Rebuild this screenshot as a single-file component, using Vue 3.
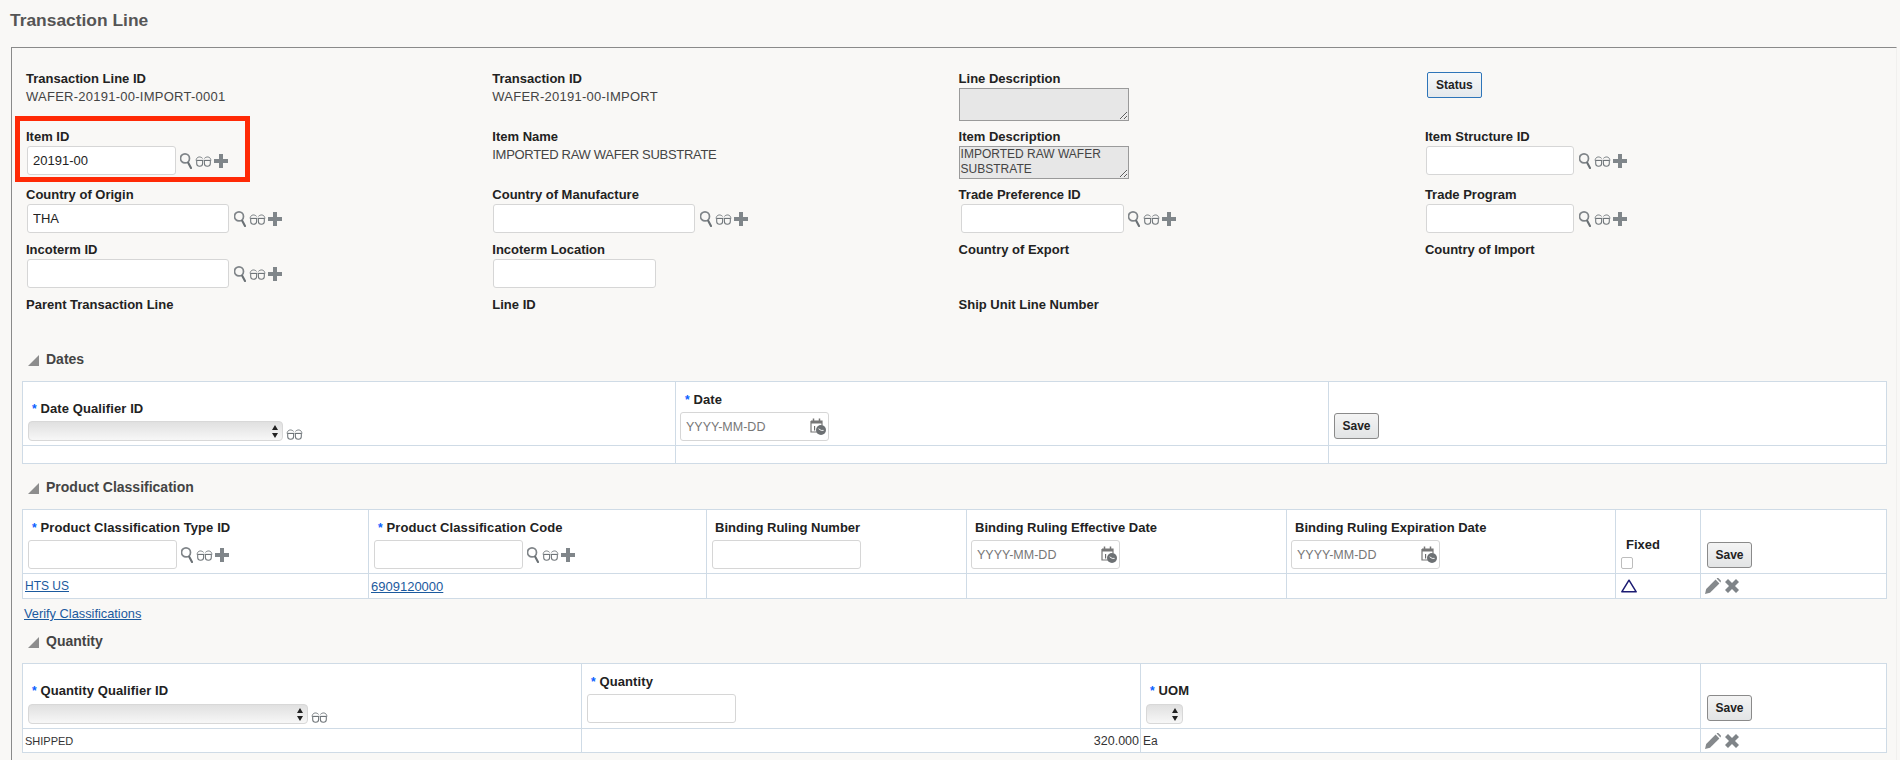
<script setup>
const lookupIcons = ['search', 'glasses', 'plus']

const formFields = [
  { label: 'Transaction Line ID', value: 'WAFER-20191-00-IMPORT-0001', spacing: 'wide' },
  { label: 'Transaction ID', value: 'WAFER-20191-00-IMPORT', spacing: 'wide' },
  { label: 'Line Description', area: '' },
  { button: 'Status' },
  { label: 'Item ID', input: '20191-00', size: 'w-s', icons: true },
  { label: 'Item Name', value: 'IMPORTED RAW WAFER SUBSTRATE', spacing: 'tight' },
  { label: 'Item Description', area: 'IMPORTED RAW WAFER SUBSTRATE' },
  { label: 'Item Structure ID', input: '', size: 'w-s', icons: true },
  { label: 'Country of Origin', input: 'THA', size: 'w-l', icons: true },
  { label: 'Country of Manufacture', input: '', size: 'w-l', icons: true },
  { label: 'Trade Preference ID', input: '', size: 'w-m', icons: true, shift: true },
  { label: 'Trade Program', input: '', size: 'w-s', icons: true },
  { label: 'Incoterm ID', input: '', size: 'w-l', icons: true },
  { label: 'Incoterm Location', input: '', size: 'w-m' },
  { label: 'Country of Export' },
  { label: 'Country of Import' },
  { label: 'Parent Transaction Line' },
  { label: 'Line ID' },
  { label: 'Ship Unit Line Number' }
]
</script>

<template>
  <div class="page">
    <svg class="sprite" aria-hidden="true">
      <symbol id="i-search" viewBox="0 0 12 16">
        <circle cx="5" cy="5.4" r="4.5" fill="none" stroke="#7f8488" stroke-width="1.7" />
        <path d="M8.2 9.8 L11 15" stroke="#6a7074" stroke-width="2.1" stroke-linecap="round" />
      </symbol>
      <symbol id="i-glasses" viewBox="0 0 17 11">
        <path d="M1.2 3.8 C1.8 .4 5.6 .2 7.6 2.4 M9.4 2.4 C11.4 .2 15.2 .4 15.8 3.8" fill="none" stroke="#7a8084" stroke-width="1" />
        <path d="M.4 4.2 H16.6" stroke="#a4a8ab" stroke-width=".7" />
        <path d="M1.7 4.4 H7.6 V7.6 C7.6 9.4 6.4 10.3 4.6 10.3 C2.9 10.3 1.7 9.4 1.7 7.6 Z" fill="none" stroke="#6f7579" stroke-width="1.05" />
        <path d="M9.4 4.4 H15.3 V7.6 C15.3 9.4 14.1 10.3 12.4 10.3 C10.6 10.3 9.4 9.4 9.4 7.6 Z" fill="none" stroke="#6f7579" stroke-width="1.05" />
      </symbol>
      <symbol id="i-plus" viewBox="0 0 14 14">
        <path d="M5 0 H9 V5 H14 V9 H9 V14 H5 V9 H0 V5 H5 Z" fill="#80868a" />
      </symbol>
      <symbol id="i-calendar" viewBox="0 0 16 17">
        <path d="M1 3 H12 V7 M1 3 V14 H7" fill="none" stroke="#777" stroke-width="1.2" />
        <path d="M1 3 H12 V5.5 H1 Z" fill="#777" />
        <path d="M3.5 .5 V3 M9.5 .5 V3" stroke="#777" stroke-width="1.5" />
        <path d="M4.6 8 V12.6" stroke="#666" stroke-width="1.1" />
        <circle cx="11" cy="12" r="5" fill="#6c7073" />
        <path d="M8.6 10.8 L11.2 12.4 L13.6 12.4" fill="none" stroke="#fff" stroke-width=".9" />
      </symbol>
      <symbol id="i-pencil" viewBox="0 0 16 16">
        <path d="M0 16 L1.2 11 L10.6 1.6 L14.4 5.4 L5 14.8 Z" fill="#85898c" />
        <path d="M11.6 .6 L12.2 0 C12.8 -.2 13.4 0 13.8 .4 L15.6 2.2 C16 2.6 16 3.2 15.8 3.8 L15.4 4.4 Z" fill="#85898c" />
      </symbol>
      <symbol id="i-cross" viewBox="0 0 14 14">
        <path d="M3 0 L7 4 L11 0 L14 3 L10 7 L14 11 L11 14 L7 10 L3 14 L0 11 L4 7 L0 3 Z" fill="#7f8488" />
      </symbol>
      <symbol id="i-triangle" viewBox="0 0 16 14">
        <path d="M8 1.2 L15.2 12.8 H.8 Z" fill="none" stroke="#1b1b72" stroke-width="1.5" stroke-linejoin="round" />
      </symbol>
      <symbol id="i-updown" viewBox="0 0 6 13">
        <path d="M3 0 L6 5 H0 Z M3 13 L0 8 H6 Z" fill="#222" />
      </symbol>
    </svg>

    <h1 class="title">Transaction Line</h1>

    <div class="panel">
      <div class="form-grid">
        <div v-for="field in formFields" :key="field.label || field.button" class="field">
          <template v-if="field.button">
            <button class="status-btn" type="button">{{ field.button }}</button>
          </template>
          <template v-else>
            <div class="lbl">{{ field.label }}</div>
            <div v-if="field.value" class="val" :class="field.spacing">{{ field.value }}</div>
            <textarea v-if="field.area !== undefined" class="area" readonly :value="field.area"></textarea>
            <div v-if="field.input !== undefined" class="input-row" :class="{ shift: field.shift }">
              <input class="txt" :class="field.size" type="text" :value="field.input" />
              <span v-if="field.icons" class="lookup">
                <svg v-for="icon in lookupIcons" :key="icon" :class="'ic-' + icon"><use :href="'#i-' + icon" /></svg>
              </span>
            </div>
          </template>
        </div>
      </div>

      <h2 class="section first"><span class="caret"></span>Dates</h2>
      <table class="grid dates">
        <colgroup><col class="c653" /><col class="c653" /><col /></colgroup>
        <tbody>
          <tr class="head-64">
            <td>
              <div class="th-lbl"><i>*</i> Date Qualifier ID</div>
              <div class="input-row">
                <span class="pick w-pick"><select></select><svg class="updown"><use href="#i-updown" /></svg></span>
                <svg class="ic-glasses after-pick"><use href="#i-glasses" /></svg>
              </div>
            </td>
            <td>
              <div class="th-lbl"><i>*</i> Date</div>
              <div class="date"><input type="text" placeholder="YYYY-MM-DD" /><svg class="ic-calendar"><use href="#i-calendar" /></svg></div>
            </td>
            <td class="save-cell"><button class="save" type="button">Save</button></td>
          </tr>
          <tr class="row-18"><td></td><td></td><td></td></tr>
        </tbody>
      </table>

      <h2 class="section"><span class="caret"></span>Product Classification</h2>
      <table class="grid product">
        <colgroup>
          <col class="c346" /><col class="c338" /><col class="c260" /><col class="c320" /><col class="c329" /><col class="c85" /><col />
        </colgroup>
        <tbody>
          <tr class="head-64">
            <td>
              <div class="th-lbl"><i>*</i> Product Classification Type ID</div>
              <div class="input-row">
                <input class="txt w-s" type="text" />
                <span class="lookup"><svg v-for="icon in lookupIcons" :key="icon" :class="'ic-' + icon"><use :href="'#i-' + icon" /></svg></span>
              </div>
            </td>
            <td>
              <div class="th-lbl"><i>*</i> Product Classification Code</div>
              <div class="input-row">
                <input class="txt w-s" type="text" />
                <span class="lookup"><svg v-for="icon in lookupIcons" :key="icon" :class="'ic-' + icon"><use :href="'#i-' + icon" /></svg></span>
              </div>
            </td>
            <td>
              <div class="th-lbl plain">Binding Ruling Number</div>
              <input class="txt w-s" type="text" />
            </td>
            <td>
              <div class="th-lbl plain">Binding Ruling Effective Date</div>
              <div class="date"><input type="text" placeholder="YYYY-MM-DD" /><svg class="ic-calendar"><use href="#i-calendar" /></svg></div>
            </td>
            <td>
              <div class="th-lbl plain">Binding Ruling Expiration Date</div>
              <div class="date"><input type="text" placeholder="YYYY-MM-DD" /><svg class="ic-calendar"><use href="#i-calendar" /></svg></div>
            </td>
            <td class="fixed-cell">
              <div class="th-lbl plain">Fixed</div>
              <span class="check"></span>
            </td>
            <td class="save-cell"><button class="save" type="button">Save</button></td>
          </tr>
          <tr class="row-25">
            <td class="cell short"><a href="#">HTS US</a></td>
            <td class="cell"><a href="#">6909120000</a></td>
            <td></td><td></td><td></td>
            <td class="tri-cell"><svg class="ic-triangle"><use href="#i-triangle" /></svg></td>
            <td class="act-cell"><svg class="ic-pencil"><use href="#i-pencil" /></svg><svg class="ic-cross"><use href="#i-cross" /></svg></td>
          </tr>
        </tbody>
      </table>
      <a class="verify" href="#">Verify Classifications</a>

      <h2 class="section qty"><span class="caret"></span>Quantity</h2>
      <table class="grid quantity">
        <colgroup><col class="c559" /><col class="c559" /><col class="c560" /><col /></colgroup>
        <tbody>
          <tr class="head-65">
            <td>
              <div class="th-lbl"><i>*</i> Quantity Qualifier ID</div>
              <div class="input-row">
                <span class="pick w-pick-q"><select></select><svg class="updown"><use href="#i-updown" /></svg></span>
                <svg class="ic-glasses after-pick"><use href="#i-glasses" /></svg>
              </div>
            </td>
            <td>
              <div class="th-lbl"><i>*</i> Quantity</div>
              <input class="txt w-s" type="text" />
            </td>
            <td>
              <div class="th-lbl"><i>*</i> UOM</div>
              <span class="pick w-uom"><select></select><svg class="updown"><use href="#i-updown" /></svg></span>
            </td>
            <td class="save-cell"><button class="save" type="button">Save</button></td>
          </tr>
          <tr class="row-24">
            <td class="cell short tiny">SHIPPED</td>
            <td class="cell num">320.000</td>
            <td class="cell short">Ea</td>
            <td class="act-cell"><svg class="ic-pencil"><use href="#i-pencil" /></svg><svg class="ic-cross"><use href="#i-cross" /></svg></td>
          </tr>
        </tbody>
      </table>
    </div>

    <div class="highlight"></div>
  </div>
</template>

<style>
html, body { margin: 0; background: #f9f8f6; }
</style>

<style scoped>
.page {
  position: relative;
  height: 760px;
  overflow: hidden;
  background: #f9f8f6;
  font-family: "Liberation Sans", Arial, sans-serif;
  font-size: 13px;
  color: #333;
}
.sprite { position: absolute; width: 0; height: 0; }
.title {
  margin: 0;
  height: 47px;
  padding: 10px 0 0 10px;
  box-sizing: border-box;
  font-size: 17.4px;
  line-height: 20px;
  font-weight: bold;
  color: #555;
}
.panel {
  margin-left: 11px;
  width: 1886px;
  height: 713px;
  box-sizing: border-box;
  border-left: 1px solid #8a8a8a;
  border-top: 1px solid #8a8a8a;
  border-right: 1px solid #f1f0ee;
}
.form-grid {
  display: grid;
  grid-template-columns: repeat(4, 466.3px);
  grid-template-rows: 58px 58px 55px 55px 52px;
  padding: 23px 0 0 14px;
}
.lbl {
  font-weight: bold;
  font-size: 13px;
  line-height: 16px;
  color: #222;
}
.val {
  line-height: 16px;
  margin-top: 2px;
  color: #444;
}
.val.wide { letter-spacing: .25px; }
.val.tight { letter-spacing: -.3px; }
.input-row { display: flex; align-items: center; }
.field .input-row { margin-top: 1px; }
.field .input-row.shift { margin-left: 1px; }
.field .txt { margin-left: 1px; }
.txt {
  height: 29px;
  box-sizing: border-box;
  border: 1px solid #d6d6d6;
  border-radius: 3px;
  background: #fff;
  padding: 0 5px;
  font: 13px "Liberation Sans", Arial, sans-serif;
  color: #222;
  display: block;
}
.w-s { width: 148.5px; }
.w-m { width: 163px; }
.w-l { width: 202px; }
.lookup { display: flex; align-items: center; margin-left: 4.5px; }
.ic-search { width: 12px; height: 16px; margin-right: 3px; }
.ic-glasses { width: 17px; height: 11px; margin-right: 2px; margin-top: 2px; }
.ic-plus { width: 14px; height: 14px; margin-top: 1px; }
.area {
  display: block;
  width: 170px;
  height: 33px;
  box-sizing: border-box;
  margin: 1px 0 0 0;
  padding: 0 1px;
  border: 1px solid #9a9a9a;
  border-radius: 0;
  background: #e7e7e7;
  font: 12px/15px "Liberation Sans", Arial, sans-serif;
  color: #444;
  resize: both;
  outline: none;
}
.status-btn {
  display: block;
  width: 55px;
  height: 26px;
  margin: 1px 0 0 2px;
  border: 1px solid #2e75b9;
  border-radius: 2px;
  background: linear-gradient(#f6f8f9, #e5e9ec);
  font: bold 12px "Liberation Sans", Arial, sans-serif;
  color: #222;
  padding: 0;
}
.section {
  display: flex;
  align-items: center;
  margin: 13px 0 12px 16px;
  height: 20px;
  font-size: 14px;
  font-weight: bold;
  color: #444;
}
.section.first { margin-top: 0; margin-bottom: 12px; }
.section.qty { margin-top: 10px; }
.caret {
  width: 0;
  height: 0;
  margin-right: 7px;
  margin-top: 3px;
  border-left: 11px solid transparent;
  border-bottom: 11px solid #8d8d8d;
}
.grid {
  margin-left: 10px;
  width: 1865px;
  table-layout: fixed;
  border-collapse: collapse;
  background: #fff;
}
.grid td {
  border: 1px solid #cfdbe6;
  vertical-align: bottom;
  padding: 0 0 4px 5px;
}
.c653 { width: 653px; }
.c346 { width: 346px; }
.c338 { width: 338px; }
.c260 { width: 260px; }
.c320 { width: 320px; }
.c329 { width: 329px; }
.c85 { width: 85px; }
.c559 { width: 559px; }
.c560 { width: 560px; }
.head-64 { height: 64px; }
.head-65 { height: 65px; }
.row-18 { height: 18px; }
.row-24 { height: 24px; }
.row-25 { height: 25px; }
.th-lbl {
  font-weight: bold;
  font-size: 13px;
  line-height: 16px;
  letter-spacing: .1px;
  color: #222;
  padding-left: 4px;
  margin-bottom: 4px;
}
.th-lbl.plain { padding-left: 3px; letter-spacing: 0; }
.th-lbl i {
  font-style: normal;
  color: #0b5fff;
  font-size: 12px;
}
.quantity .th-lbl { margin-bottom: 5px; }
.quantity .txt { margin-top: -1px; margin-bottom: 1px; }
.pick { position: relative; display: block; height: 20px; }
.w-pick { width: 255px; }
.w-pick-q { width: 280px; }
.w-uom { width: 37px; }
.pick select {
  appearance: none;
  display: block;
  width: 100%;
  height: 20px;
  box-sizing: border-box;
  border: 1px solid #d8d8d8;
  border-radius: 4px;
  background: linear-gradient(#e0e0e0, #f7f7f7);
}
.updown {
  position: absolute;
  right: 5px;
  top: 4px;
  width: 6px;
  height: 13px;
}
.after-pick { margin-left: 3px; margin-right: 0; margin-top: 6px; }
.date {
  display: flex;
  align-items: center;
  width: 149px;
  height: 29px;
  margin-left: -1px;
  box-sizing: border-box;
  border: 1px solid #d6d6d6;
  border-radius: 3px;
  background: #fff;
}
.date input {
  width: 125px;
  border: 0;
  padding: 0 0 0 5px;
  box-sizing: border-box;
  outline: none;
  background: transparent;
  font: 12.5px "Liberation Sans", Arial, sans-serif;
}
.date input::placeholder { color: #777; }
.ic-calendar { width: 16px; height: 17px; margin-left: 4px; }
.grid td.save-cell { padding-left: 6px; padding-bottom: 6px; }
.dates td.save-cell { padding-left: 5px; }
.product td.save-cell { padding-bottom: 5px; }
.quantity td.save-cell { padding-bottom: 7px; }
.save {
  display: block;
  width: 45px;
  height: 26px;
  border: 1px solid #8a8a8a;
  border-radius: 3px;
  background: linear-gradient(#f4f4f4, #e2e4e5);
  font: bold 12px "Liberation Sans", Arial, sans-serif;
  color: #222;
  padding: 0;
}
.fixed-cell .th-lbl { margin-bottom: 4px; padding-left: 5px; }
.check {
  display: block;
  width: 12px;
  height: 12px;
  box-sizing: border-box;
  border: 1px solid #bdbdbd;
  border-radius: 2px;
  background: #fff;
}
.grid td.cell {
  padding: 0 0 0 2px;
  vertical-align: middle;
  font-size: 13px;
}
.grid td.short { font-size: 12px; }
.grid td.tiny { font-size: 11px; }
.cell a, .verify {
  color: #1b5a9e;
  text-decoration: underline;
}
.grid td.num { text-align: right; padding: 0 1px 0 0; font-size: 12.5px; }
.grid td.tri-cell { padding: 0 0 0 5px; vertical-align: middle; }
.ic-triangle { display: block; width: 16px; height: 14px; margin-top: -1px; }
.grid td.act-cell { padding: 0 0 0 4px; vertical-align: middle; }
.ic-pencil { width: 16px; height: 16px; vertical-align: middle; margin-right: 4px; }
.ic-cross { width: 14px; height: 14px; vertical-align: middle; }
.verify {
  display: block;
  margin: 8px 0 0 12px;
  font-size: 12.8px;
  line-height: 14px;
}
.highlight {
  position: absolute;
  left: 15px;
  top: 116px;
  width: 235px;
  height: 66px;
  box-sizing: border-box;
  border: 5px solid #ff2a06;
}
</style>
